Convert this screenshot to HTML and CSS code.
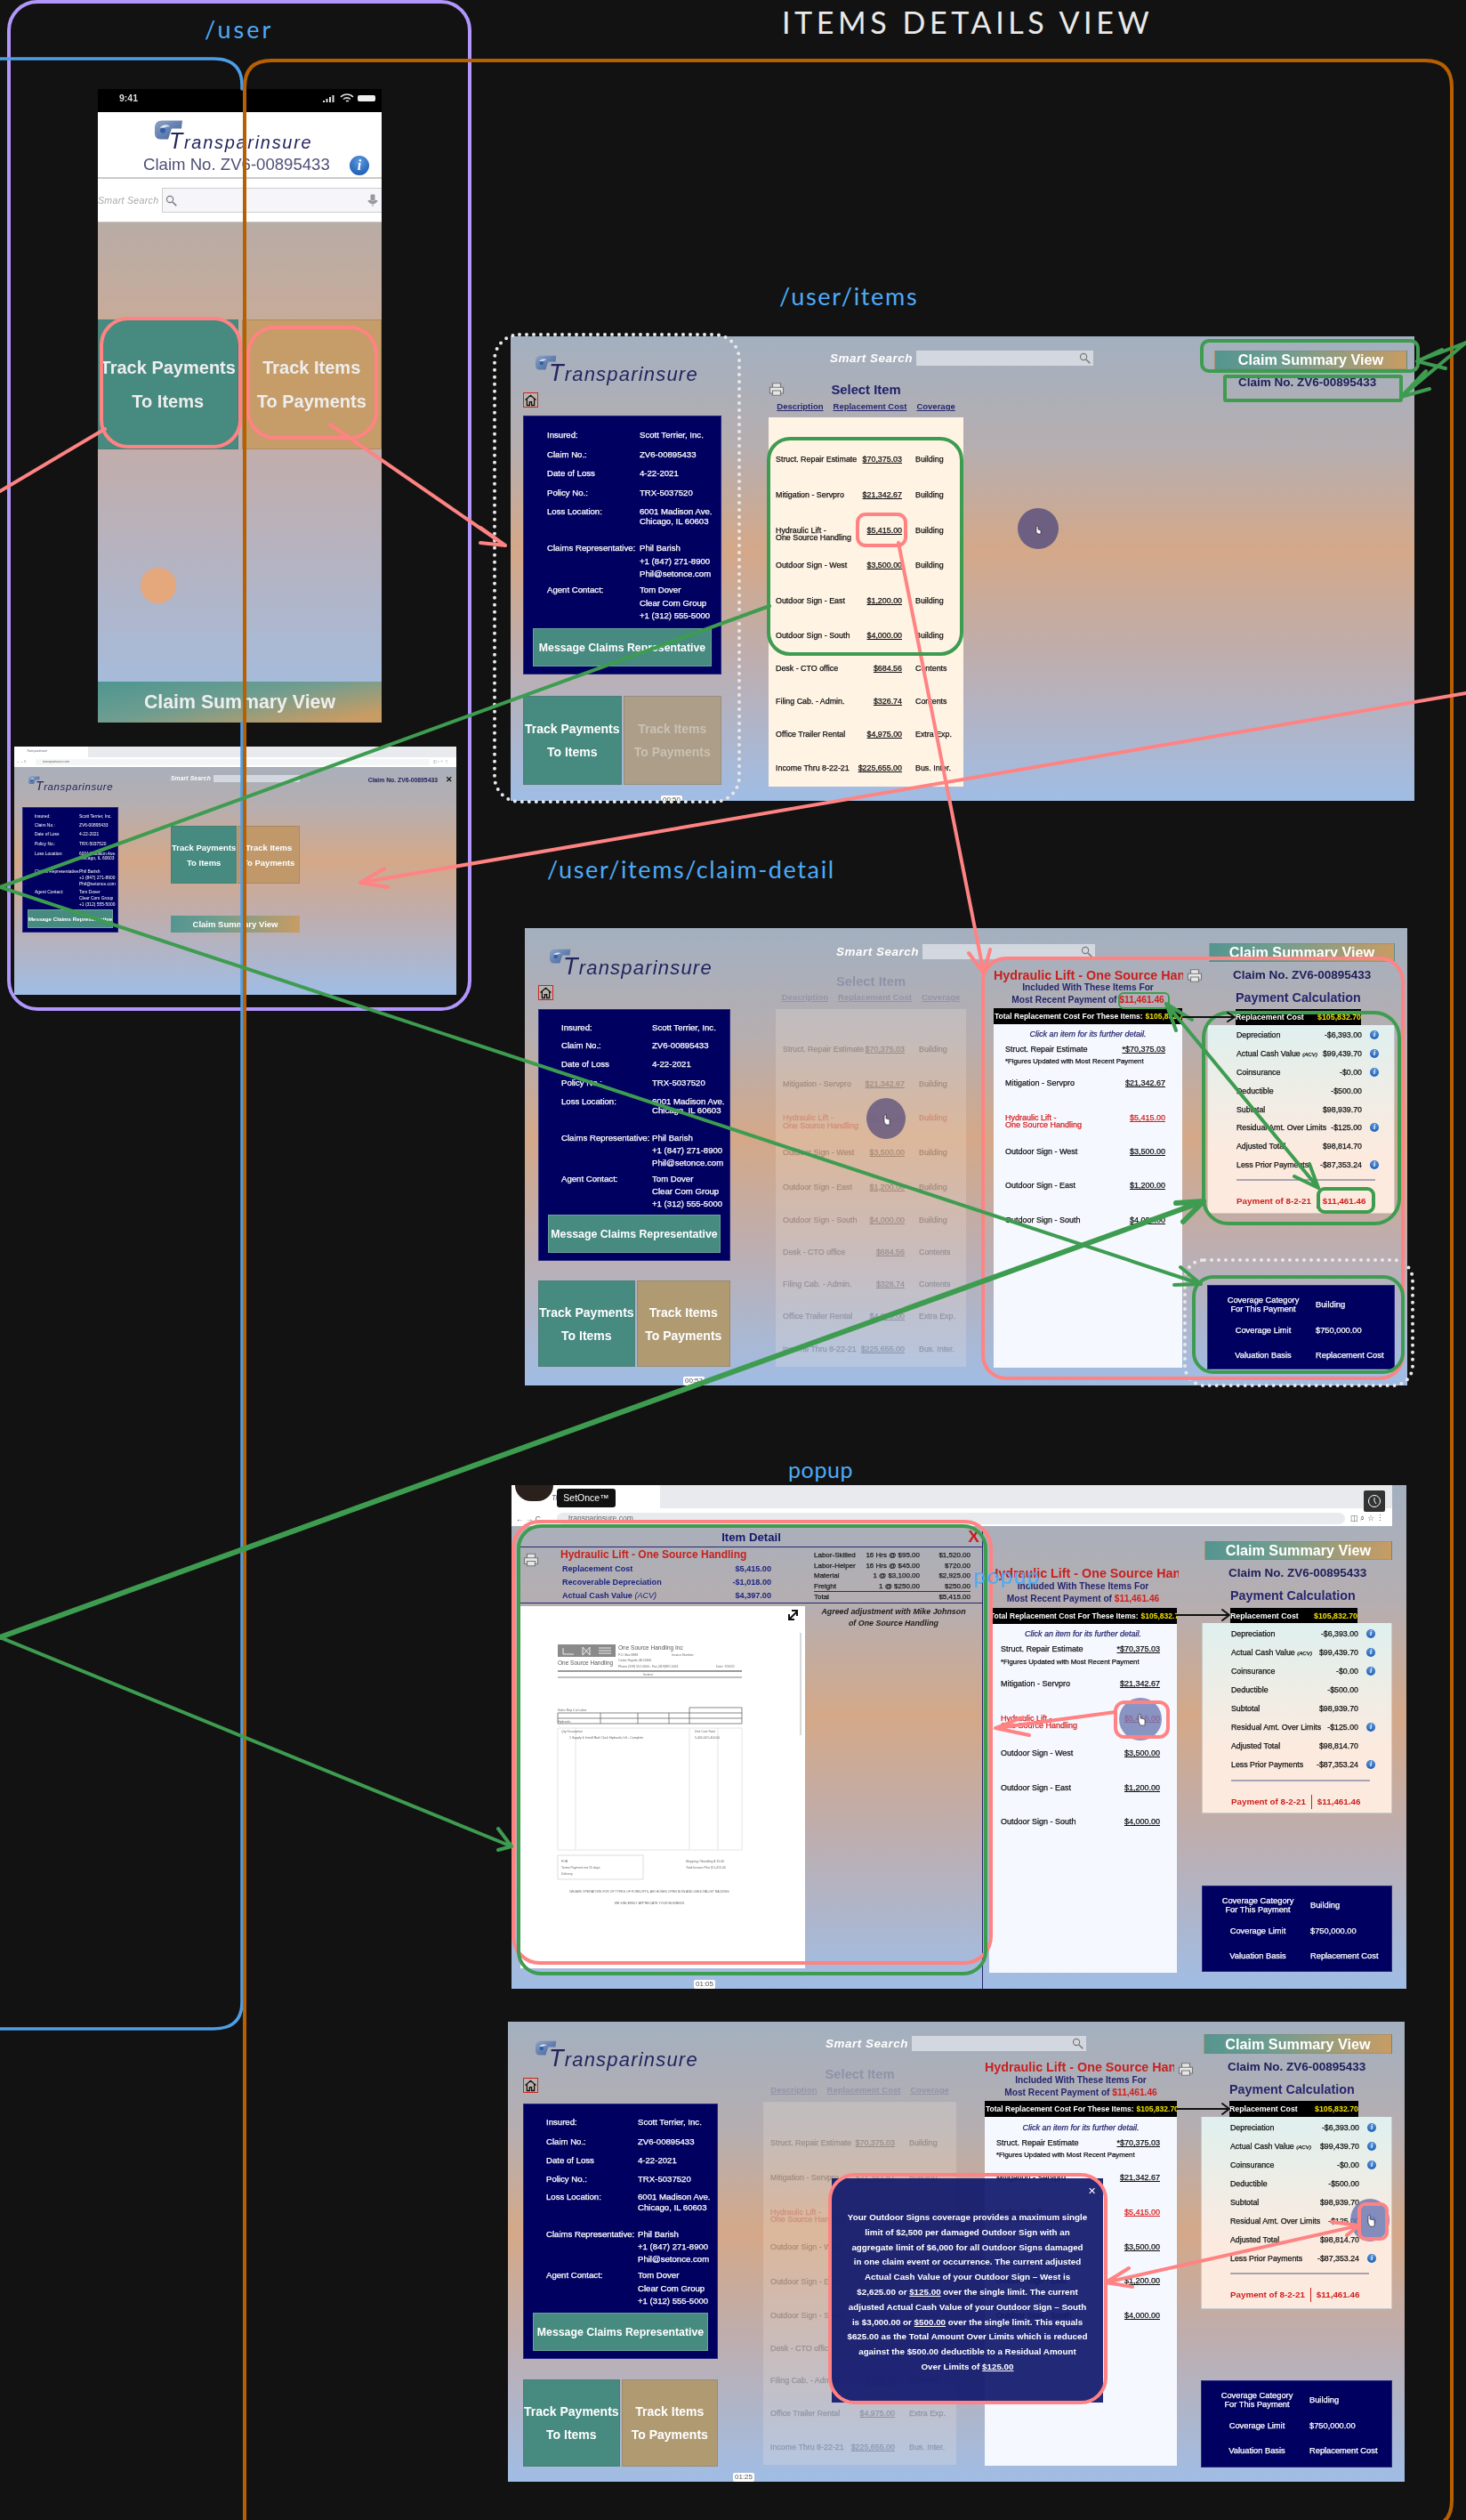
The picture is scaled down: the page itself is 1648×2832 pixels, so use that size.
FILE: index.html
```html
<!DOCTYPE html>
<html lang="en">
<head>
    <meta charset="UTF-8">
    <title>Items details view</title>
    <link rel="stylesheet" href="styles.css">
</head>
<body>
<svg width="0" height="0" class="defs">
    <defs>
        <linearGradient id="markFill" x1="0" y1="0" x2="1" y2="1">
            <stop offset="0" stop-color="#8fa3c4"/>
            <stop offset="1" stop-color="#3d5f9c"/>
        </linearGradient>
        <symbol id="mark" viewBox="0 0 32 24">
            <path d="M8 1h23l-1 9H19l-4 12H6C2 22 0 19 0 15V9C0 4 3 1 8 1z" fill="url(#markFill)"/>
            <path d="M6 9c3-4 9-4 11-1-3-1-6 0-8 3z" fill="#dfe8f4"/>
            <circle cx="9" cy="12" r="3" fill="#2f5fa8"/>
        </symbol>
        <symbol id="printer" viewBox="0 0 24 22">
            <path d="M6 8V2h12v6M6 17H2V8h20v9h-4M6 13h12v7H6z" fill="#e6e6e6" stroke="#777" stroke-width="1.6"/>
        </symbol>
        <symbol id="glass" viewBox="0 0 18 18">
            <circle cx="7" cy="7" r="5" fill="none" stroke="#777" stroke-width="1.6"/>
            <path d="M11 11l6 6" stroke="#777" stroke-width="2.2"/>
        </symbol>
        <symbol id="house" viewBox="0 0 20 20">
            <path d="M2 10l8-7 8 7M4.500 8.500V18h4v-5h3v5h4V8.500" fill="none" stroke="#111" stroke-width="1.700"/>
        </symbol>
    </defs>
</svg>

<!-- hand written labels -->
<div class="tag tag-user">/user</div>
<div class="title">ITEMS DETAILS VIEW</div>
<div class="tag tag-items">/user/items</div>
<div class="tag tag-claim">/user/items/claim-detail</div>
<div class="tag tag-popup">popup</div>

<!-- phone -->
<section class="phone">
    <div class="status">
        <span>9:41</span>
        <svg width="60" height="11" viewBox="0 0 60 11">
            <path d="M0 8h2v2H0zM3.500 6h2v4h-2zM7 4h2v6H7zM10.500 2h2v8h-2z" fill="#ddd"/>
            <path d="M20 4c4-4 10-4 14 0M23 6.500c2.500-2 5.500-2 8 0M26 9c1-1 2-1 3 0" fill="none" stroke="#ddd" stroke-width="1.600"/>
            <rect x="39" y="2" width="20" height="7" rx="2" fill="#eee"/>
        </svg>
    </div>
    <div class="phone-brand">
        <div class="logo logo-phone">
            <svg class="mark"><use href="#mark"/></svg>
            <span class="logo-text"><b>T</b>ransparinsure</span>
        </div>
        <div class="phone-claim">Claim No. ZV6-00895433<i class="dot dot-big">i</i></div>
    </div>
    <div class="phone-search">
        <span>Smart Search</span>
        <div class="phone-input">
            <svg width="13" height="13"><use href="#glass"/></svg>
            <svg width="12" height="15" viewBox="0 0 12 15"><path d="M4 1h4v7H4zM1 7c0 5 10 5 10 0M6 11v3" fill="#999" stroke="#999"/></svg>
        </div>
    </div>
    <div class="phone-body">
        <div class="tracks">
            <div class="track teal">Track Payments<br>To Items</div>
            <div class="track tan">Track Items<br>To Payments</div>
        </div>
    </div>
    <div class="summary phone-summary">Claim Summary View</div>
    <span class="touch"></span>
</section>

<!-- browser thumbnail -->
<section class="screen screen-e">
    <div class="chrome">
        <div class="tabs"><span class="tab">Transparinsure</span></div>
        <div class="address-row"><span class="nav">← → C</span><div class="address">transparinsure.com</div><span class="tools">◫ ⌕ ☆ ⋮</span></div>
    </div>
    <div class="side">
        <div class="logo">
            <svg class="mark"><use href="#mark"/></svg>
            <span class="logo-text"><b>T</b>ransparinsure</span>
        </div>
        <div class="info">
            <div class="info-row"><span>Insured:</span><span>Scott Terrier, Inc.</span></div>
            <div class="info-row"><span>Claim No.:</span><span>ZV6-00895433</span></div>
            <div class="info-row"><span>Date of Loss</span><span>4-22-2021</span></div>
            <div class="info-row"><span>Policy No.:</span><span>TRX-5037520</span></div>
            <div class="info-row addr"><span>Loss Location:</span><span>6001 Madison Ave.<br>Chicago, IL 60603</span></div>
            <div class="info-row contact rep"><span>Claims Representative:</span><span>Phil Barish<br>+1 (847) 271-8900<br>Phil@setonce.com</span></div>
            <div class="info-row contact agent"><span>Agent Contact:</span><span>Tom Dover<br>Clear Com Group<br>+1 (312) 555-5000</span></div>
            <div class="msg-btn">Message Claims Representative</div>
        </div>
    </div>
    <div class="thumb-mid">
        <div class="search">
            <span>Smart Search</span>
            <div class="search-input"></div>
        </div>
        <div class="tracks">
            <div class="track teal">Track Payments<br>To Items</div>
            <div class="track tan">Track Items<br>To Payments</div>
        </div>
        <div class="summary">Claim Summary View</div>
    </div>
    <div class="thumb-right">
        <span>Claim No. ZV6-00895433</span><b>✕</b>
    </div>
</section>

<!-- /user/items -->
<section class="screen screen-a">
    <div class="side">
        <div class="logo">
            <svg class="mark"><use href="#mark"/></svg>
            <span class="logo-text"><b>T</b>ransparinsure</span>
        </div>
        <div class="home"><svg width="15" height="15"><use href="#house"/></svg></div>
        <div class="info">
            <div class="info-row"><span>Insured:</span><span>Scott Terrier, Inc.</span></div>
            <div class="info-row"><span>Claim No.:</span><span>ZV6-00895433</span></div>
            <div class="info-row"><span>Date of Loss</span><span>4-22-2021</span></div>
            <div class="info-row"><span>Policy No.:</span><span>TRX-5037520</span></div>
            <div class="info-row addr"><span>Loss Location:</span><span>6001 Madison Ave.<br>Chicago, IL 60603</span></div>
            <div class="info-row contact rep"><span>Claims Representative:</span><span>Phil Barish<br>+1 (847) 271-8900<br>Phil@setonce.com</span></div>
            <div class="info-row contact agent"><span>Agent Contact:</span><span>Tom Dover<br>Clear Com Group<br>+1 (312) 555-5000</span></div>
            <div class="msg-btn">Message Claims Representative</div>
        </div>
        <div class="tracks">
            <div class="track teal">Track Payments<br>To Items</div>
            <div class="track tan off">Track Items<br>To Payments</div>
        </div>
    </div>
    <div class="search">
        <span>Smart Search</span>
        <div class="search-input"><svg width="13" height="13"><use href="#glass"/></svg></div>
    </div>
    <div class="list">
        <svg class="list-print" width="18" height="17"><use href="#printer"/></svg>
        <div class="list-title">Select Item</div>
        <div class="list-head"><u>Description</u><u>Replacement Cost</u><u>Coverage</u></div>
        <div class="items">
            <div class="item"><span>Struct. Repair Estimate</span><u>$70,375.03</u><span>Building</span></div>
            <div class="item"><span>Mitigation - Servpro</span><u>$21,342.67</u><span>Building</span></div>
            <div class="item"><span class="two">Hydraulic Lift -<br>One Source Handling</span><u>$5,415.00</u><span>Building</span></div>
            <div class="item"><span>Outdoor Sign - West</span><u>$3,500.00</u><span>Building</span></div>
            <div class="item"><span>Outdoor Sign - East</span><u>$1,200.00</u><span>Building</span></div>
            <div class="item"><span>Outdoor Sign - South</span><u>$4,000.00</u><span>Building</span></div>
            <div class="item"><span>Desk - CTO office</span><u>$684.56</u><span>Contents</span></div>
            <div class="item"><span>Filing Cab. - Admin.</span><u>$326.74</u><span>Contents</span></div>
            <div class="item"><span>Office Trailer Rental</span><u>$4,975.00</u><span>Extra Exp.</span></div>
            <div class="item"><span>Income Thru 8-22-21</span><u>$225,655.00</u><span>Bus. Inter.</span></div>
        </div>
    </div>
    <div class="calc">
        <div class="summary">Claim Summary View</div>
        <div class="claim-no">Claim No. ZV6-00895433</div>
    </div>
    <span class="stamp">00:50</span>
</section>

<!-- /user/items/claim-detail -->
<section class="screen screen-b">
    <div class="side">
        <div class="logo">
            <svg class="mark"><use href="#mark"/></svg>
            <span class="logo-text"><b>T</b>ransparinsure</span>
        </div>
        <div class="home"><svg width="15" height="15"><use href="#house"/></svg></div>
        <div class="info">
            <div class="info-row"><span>Insured:</span><span>Scott Terrier, Inc.</span></div>
            <div class="info-row"><span>Claim No.:</span><span>ZV6-00895433</span></div>
            <div class="info-row"><span>Date of Loss</span><span>4-22-2021</span></div>
            <div class="info-row"><span>Policy No.:</span><span>TRX-5037520</span></div>
            <div class="info-row addr"><span>Loss Location:</span><span>6001 Madison Ave.<br>Chicago, IL 60603</span></div>
            <div class="info-row contact rep"><span>Claims Representative:</span><span>Phil Barish<br>+1 (847) 271-8900<br>Phil@setonce.com</span></div>
            <div class="info-row contact agent"><span>Agent Contact:</span><span>Tom Dover<br>Clear Com Group<br>+1 (312) 555-5000</span></div>
            <div class="msg-btn">Message Claims Representative</div>
        </div>
        <div class="tracks">
            <div class="track teal">Track Payments<br>To Items</div>
            <div class="track sand">Track Items<br>To Payments</div>
        </div>
    </div>
    <div class="search">
        <span>Smart Search</span>
        <div class="search-input"><svg width="13" height="13"><use href="#glass"/></svg></div>
    </div>
    <div class="list faded">
        <div class="list-title">Select Item</div>
        <div class="list-head"><u>Description</u><u>Replacement Cost</u><u>Coverage</u></div>
        <div class="items">
            <div class="item"><span>Struct. Repair Estimate</span><u>$70,375.03</u><span>Building</span></div>
            <div class="item"><span>Mitigation - Servpro</span><u>$21,342.67</u><span>Building</span></div>
            <div class="item red"><span class="two">Hydraulic Lift -<br>One Source Handling</span><u>$5,415.00</u><span>Building</span></div>
            <div class="item"><span>Outdoor Sign - West</span><u>$3,500.00</u><span>Building</span></div>
            <div class="item"><span>Outdoor Sign - East</span><u>$1,200.00</u><span>Building</span></div>
            <div class="item"><span>Outdoor Sign - South</span><u>$4,000.00</u><span>Building</span></div>
            <div class="item"><span>Desk - CTO office</span><u>$684.56</u><span>Contents</span></div>
            <div class="item"><span>Filing Cab. - Admin.</span><u>$326.74</u><span>Contents</span></div>
            <div class="item"><span>Office Trailer Rental</span><u>$4,975.00</u><span>Extra Exp.</span></div>
            <div class="item"><span>Income Thru 8-22-21</span><u>$225,655.00</u><span>Bus. Inter.</span></div>
        </div>
    </div>
    <div class="detail">
        <div class="detail-title">Hydraulic Lift - One Source Handling</div>
        <svg class="detail-print" width="18" height="17"><use href="#printer"/></svg>
        <div class="detail-sub">Included With These Items For<br>Most Recent Payment of <em>$11,461.46</em></div>
        <div class="bar"><span>Total Replacement Cost For These Items:</span> <b>$105,832.70</b></div>
        <div class="pay-items">
            <div class="hint">Click an item for its further detail.</div>
            <div class="pay-item"><span>Struct. Repair Estimate</span><u>*$70,375.03</u></div>
            <div class="note">*Figures Updated with Most Recent Payment</div>
            <div class="pay-item"><span>Mitigation - Servpro</span><u>$21,342.67</u></div>
            <div class="pay-item red"><span class="two">Hydraulic Lift -<br>One Source Handling</span><u>$5,415.00</u></div>
            <div class="pay-item"><span>Outdoor Sign - West</span><u>$3,500.00</u></div>
            <div class="pay-item"><span>Outdoor Sign - East</span><u>$1,200.00</u></div>
            <div class="pay-item"><span>Outdoor Sign - South</span><u>$4,000.00</u></div>
        </div>
    </div>
    <div class="calc">
        <div class="summary">Claim Summary View</div>
        <div class="claim-no">Claim No. ZV6-00895433</div>
        <div class="calc-title">Payment Calculation</div>
        <div class="calc-bar"><span>Replacement Cost</span><b>$105,832.70</b></div>
        <div class="calc-panel">
            <div class="calc-row"><span>Depreciation</span><span>-$6,393.00</span><i class="dot">i</i></div>
            <div class="calc-row"><span>Actual Cash Value <small>(ACV)</small></span><span>$99,439.70</span><i class="dot">i</i></div>
            <div class="calc-row"><span>Coinsurance</span><span>-$0.00</span><i class="dot">i</i></div>
            <div class="calc-row"><span>Deductible</span><span>-$500.00</span></div>
            <div class="calc-row"><span>Subtotal</span><span>$98,939.70</span></div>
            <div class="calc-row"><span>Residual Amt. Over Limits</span><span>-$125.00</span><i class="dot">i</i></div>
            <div class="calc-row"><span>Adjusted Total</span><span>$98,814.70</span></div>
            <div class="calc-row"><span>Less Prior Payments</span><span>-$87,353.24</span><i class="dot">i</i></div>
            <div class="calc-rule"></div>
            <div class="calc-pay"><span>Payment of 8-2-21</span><b>$11,461.46</b></div>
        </div>
        <div class="cover">
            <span class="cover-key">Coverage Category<br>For This Payment</span><span>Building</span>
            <span class="cover-key">Coverage Limit</span><span>$750,000.00</span>
            <span class="cover-key">Valuation Basis</span><span>Replacement Cost</span>
        </div>
    </div>
    <span class="stamp">00:57</span>
</section>

<!-- popup -->
<section class="screen screen-c">
    <div class="chrome">
        <div class="tabs"><span class="tab">Transparinsure</span></div>
        <div class="address-row"><span class="nav">← → C</span><div class="address">transparinsure.com</div><span class="tools">◫ ⌕ ☆ ⋮</span></div>
        <span class="avatar"></span>
        <span class="badge">SetOnce™</span>
        <span class="clock"><svg width="16" height="16" viewBox="0 0 16 16"><circle cx="8" cy="8" r="6.500" fill="none" stroke="#fff"/><path d="M8 4v4l2 3" fill="none" stroke="#fff"/></svg></span>
    </div>
    <div class="modal">
        <div class="modal-top"><h2>Item Detail</h2><b class="modal-x">X</b></div>
        <div class="modal-info">
            <svg width="18" height="20"><use href="#printer"/></svg>
            <div class="modal-costs">
                <h3>Hydraulic Lift - One Source Handling</h3>
                <div class="cost"><span>Replacement Cost</span><span>$5,415.00</span></div>
                <div class="cost"><span>Recoverable Depreciation</span><span>-$1,018.00</span></div>
                <div class="cost"><span>Actual Cash Value <i>(ACV)</i></span><span>$4,397.00</span></div>
            </div>
            <div class="modal-table">
                <div class="mt-row"><span>Labor-Skilled</span><span>16 Hrs @ $95.00</span><span>$1,520.00</span></div>
                <div class="mt-row"><span>Labor-Helper</span><span>16 Hrs @ $45.00</span><span>$720.00</span></div>
                <div class="mt-row"><span>Material</span><span>1 @ $3,100.00</span><span>$2,925.00</span></div>
                <div class="mt-row"><span>Freight</span><span>1 @ $250.00</span><span>$250.00</span></div>
                <div class="mt-row mt-total"><span>Total</span><span></span><span>$5,415.00</span></div>
            </div>
        </div>
        <div class="modal-main">
            <div class="doc">
                <svg width="320" height="407" viewBox="0 0 320 407">
                    <rect x="42" y="43" width="65" height="14" fill="#8a8a8a"/>
                    <path d="M48 54V47M48 54h12M70 46v9M78 46v9M70 46l8 9M78 46l-8 9M88 47h14M88 50h14M88 53h14" stroke="#eee" fill="none"/>
                    <text x="42" y="66" class="doc-t">One Source Handling</text>
                    <text x="110" y="49" class="doc-t">One Source Handling Inc</text>
                    <text x="110" y="56" class="doc-s">P.O. Box 8883</text>
                    <text x="110" y="62" class="doc-s">Cedar Rapids, IA 52406</text>
                    <text x="110" y="69" class="doc-s">Phone (319) 551 0000 - Fax (319)857-5451</text>
                    <text x="170" y="56" class="doc-s">Invoice Number:</text>
                    <text x="220" y="69" class="doc-s">Date: 7/20/21</text>
                    <path d="M42 73h207" stroke="#777" stroke-width="1.500"/>
                    <path d="M42 80h207" stroke="#aaa" stroke-width="1.500"/>
                    <text x="138" y="78" class="doc-s">Invoice</text>
                    <path d="M42 120h207v12H42zM42 126h207M90 120v12M132 120v12M167 120v12M190 114v18M190 114h59v6" fill="none" stroke="#555" stroke-width=".7"/>
                    <text x="42" y="118" class="doc-s">Sales Rep Cut Labor</text>
                    <text x="42" y="131" class="doc-s">Hydraulic</text>
                    <path d="M42 137h207v137H42zM62 137v137M190 137v137M222 137v137" fill="none" stroke="#e4e4e4"/>
                    <text x="46" y="142" class="doc-s">Qty  Description</text>
                    <text x="196" y="142" class="doc-s">Unit Cost   Total</text>
                    <text x="55" y="149" class="doc-s">1   Supply &amp; Install Bad Clock Hydraulic Lift - Complete</text>
                    <text x="196" y="149" class="doc-s">5,400.00   5,400.00</text>
                    <rect x="42" y="280" width="96" height="27" fill="none" stroke="#ddd"/>
                    <text x="46" y="288" class="doc-s">FOB</text>
                    <text x="46" y="295" class="doc-s">Terms   Payment net 15 days</text>
                    <text x="46" y="302" class="doc-s">Delivery</text>
                    <text x="186" y="288" class="doc-s">Shipping / Handling  $ 15.00</text>
                    <text x="186" y="295" class="doc-s">Total Invoice  Plus  $ 5,415.00</text>
                    <text x="145" y="322" text-anchor="middle" class="doc-s">WE ARE OPERATORS FOR OF TYPES OF FORKLIFTS, AIR HOSES OPEN NOW AND USED PALLET RACKING</text>
                    <text x="145" y="335" text-anchor="middle" class="doc-s">WE SINCERELY APPRECIATE YOUR BUSINESS</text>
                    <path d="M315 30v115" stroke="#ccc" stroke-width="1.500"/>
                    <path d="M302 15l9-9M305 5h6v6M302 9v6h6" fill="none" stroke="#111" stroke-width="2"/>
                </svg>
            </div>
            <div class="modal-note">Agreed adjustment with Mike Johnson<br>of One Source Handling</div>
        </div>
    </div>
    <div class="detail">
        <div class="detail-title">Hydraulic Lift - One Source Handling</div>
        <div class="detail-sub">Included With These Items For<br>Most Recent Payment of <em>$11,461.46</em></div>
        <div class="bar"><span>Total Replacement Cost For These Items:</span> <b>$105,832.70</b></div>
        <div class="pay-items">
            <div class="hint">Click an item for its further detail.</div>
            <div class="pay-item"><span>Struct. Repair Estimate</span><u>*$70,375.03</u></div>
            <div class="note">*Figures Updated with Most Recent Payment</div>
            <div class="pay-item"><span>Mitigation - Servpro</span><u>$21,342.67</u></div>
            <div class="pay-item red"><span class="two">Hydraulic Lift -<br>One Source Handling</span><u>$5,415.00</u></div>
            <div class="pay-item"><span>Outdoor Sign - West</span><u>$3,500.00</u></div>
            <div class="pay-item"><span>Outdoor Sign - East</span><u>$1,200.00</u></div>
            <div class="pay-item"><span>Outdoor Sign - South</span><u>$4,000.00</u></div>
        </div>
    </div>
    <div class="calc">
        <div class="summary">Claim Summary View</div>
        <div class="claim-no">Claim No. ZV6-00895433</div>
        <div class="calc-title">Payment Calculation</div>
        <div class="calc-bar"><span>Replacement Cost</span><b>$105,832.70</b></div>
        <div class="calc-panel">
            <div class="calc-row"><span>Depreciation</span><span>-$6,393.00</span><i class="dot">i</i></div>
            <div class="calc-row"><span>Actual Cash Value <small>(ACV)</small></span><span>$99,439.70</span><i class="dot">i</i></div>
            <div class="calc-row"><span>Coinsurance</span><span>-$0.00</span><i class="dot">i</i></div>
            <div class="calc-row"><span>Deductible</span><span>-$500.00</span></div>
            <div class="calc-row"><span>Subtotal</span><span>$98,939.70</span></div>
            <div class="calc-row"><span>Residual Amt. Over Limits</span><span>-$125.00</span><i class="dot">i</i></div>
            <div class="calc-row"><span>Adjusted Total</span><span>$98,814.70</span></div>
            <div class="calc-row"><span>Less Prior Payments</span><span>-$87,353.24</span><i class="dot">i</i></div>
            <div class="calc-rule"></div>
            <div class="calc-pay"><span>Payment of 8-2-21</span><b>$11,461.46</b></div>
        </div>
        <div class="cover">
            <span class="cover-key">Coverage Category<br>For This Payment</span><span>Building</span>
            <span class="cover-key">Coverage Limit</span><span>$750,000.00</span>
            <span class="cover-key">Valuation Basis</span><span>Replacement Cost</span>
        </div>
    </div>
    <span class="stamp">01:05</span>
</section>

<!-- info popup -->
<section class="screen screen-d">
    <div class="side">
        <div class="logo">
            <svg class="mark"><use href="#mark"/></svg>
            <span class="logo-text"><b>T</b>ransparinsure</span>
        </div>
        <div class="home"><svg width="15" height="15"><use href="#house"/></svg></div>
        <div class="info">
            <div class="info-row"><span>Insured:</span><span>Scott Terrier, Inc.</span></div>
            <div class="info-row"><span>Claim No.:</span><span>ZV6-00895433</span></div>
            <div class="info-row"><span>Date of Loss</span><span>4-22-2021</span></div>
            <div class="info-row"><span>Policy No.:</span><span>TRX-5037520</span></div>
            <div class="info-row addr"><span>Loss Location:</span><span>6001 Madison Ave.<br>Chicago, IL 60603</span></div>
            <div class="info-row contact rep"><span>Claims Representative:</span><span>Phil Barish<br>+1 (847) 271-8900<br>Phil@setonce.com</span></div>
            <div class="info-row contact agent"><span>Agent Contact:</span><span>Tom Dover<br>Clear Com Group<br>+1 (312) 555-5000</span></div>
            <div class="msg-btn">Message Claims Representative</div>
        </div>
        <div class="tracks">
            <div class="track teal">Track Payments<br>To Items</div>
            <div class="track sand">Track Items<br>To Payments</div>
        </div>
    </div>
    <div class="search">
        <span>Smart Search</span>
        <div class="search-input"><svg width="13" height="13"><use href="#glass"/></svg></div>
    </div>
    <div class="list faded">
        <div class="list-title">Select Item</div>
        <div class="list-head"><u>Description</u><u>Replacement Cost</u><u>Coverage</u></div>
        <div class="items">
            <div class="item"><span>Struct. Repair Estimate</span><u>$70,375.03</u><span>Building</span></div>
            <div class="item"><span>Mitigation - Servpro</span><u>$21,342.67</u><span>Building</span></div>
            <div class="item red"><span class="two">Hydraulic Lift -<br>One Source Handling</span><u>$5,415.00</u><span>Building</span></div>
            <div class="item"><span>Outdoor Sign - West</span><u>$3,500.00</u><span>Building</span></div>
            <div class="item"><span>Outdoor Sign - East</span><u>$1,200.00</u><span>Building</span></div>
            <div class="item"><span>Outdoor Sign - South</span><u>$4,000.00</u><span>Building</span></div>
            <div class="item"><span>Desk - CTO office</span><u>$684.56</u><span>Contents</span></div>
            <div class="item"><span>Filing Cab. - Admin.</span><u>$326.74</u><span>Contents</span></div>
            <div class="item"><span>Office Trailer Rental</span><u>$4,975.00</u><span>Extra Exp.</span></div>
            <div class="item"><span>Income Thru 8-22-21</span><u>$225,655.00</u><span>Bus. Inter.</span></div>
        </div>
    </div>
    <div class="detail">
        <div class="detail-title">Hydraulic Lift - One Source Handling</div>
        <svg class="detail-print" width="18" height="17"><use href="#printer"/></svg>
        <div class="detail-sub">Included With These Items For<br>Most Recent Payment of <em>$11,461.46</em></div>
        <div class="bar"><span>Total Replacement Cost For These Items:</span> <b>$105,832.70</b></div>
        <div class="pay-items">
            <div class="hint">Click an item for its further detail.</div>
            <div class="pay-item"><span>Struct. Repair Estimate</span><u>*$70,375.03</u></div>
            <div class="note">*Figures Updated with Most Recent Payment</div>
            <div class="pay-item"><span>Mitigation - Servpro</span><u>$21,342.67</u></div>
            <div class="pay-item red"><span class="two">Hydraulic Lift -<br>One Source Handling</span><u>$5,415.00</u></div>
            <div class="pay-item"><span>Outdoor Sign - West</span><u>$3,500.00</u></div>
            <div class="pay-item"><span>Outdoor Sign - East</span><u>$1,200.00</u></div>
            <div class="pay-item"><span>Outdoor Sign - South</span><u>$4,000.00</u></div>
        </div>
    </div>
    <div class="calc">
        <div class="summary">Claim Summary View</div>
        <div class="claim-no">Claim No. ZV6-00895433</div>
        <div class="calc-title">Payment Calculation</div>
        <div class="calc-bar"><span>Replacement Cost</span><b>$105,832.70</b></div>
        <div class="calc-panel">
            <div class="calc-row"><span>Depreciation</span><span>-$6,393.00</span><i class="dot">i</i></div>
            <div class="calc-row"><span>Actual Cash Value <small>(ACV)</small></span><span>$99,439.70</span><i class="dot">i</i></div>
            <div class="calc-row"><span>Coinsurance</span><span>-$0.00</span><i class="dot">i</i></div>
            <div class="calc-row"><span>Deductible</span><span>-$500.00</span></div>
            <div class="calc-row"><span>Subtotal</span><span>$98,939.70</span></div>
            <div class="calc-row"><span>Residual Amt. Over Limits</span><span>-$125.00</span><i class="dot">i</i></div>
            <div class="calc-row"><span>Adjusted Total</span><span>$98,814.70</span></div>
            <div class="calc-row"><span>Less Prior Payments</span><span>-$87,353.24</span><i class="dot">i</i></div>
            <div class="calc-rule"></div>
            <div class="calc-pay"><span>Payment of 8-2-21</span><b>$11,461.46</b></div>
        </div>
        <div class="cover">
            <span class="cover-key">Coverage Category<br>For This Payment</span><span>Building</span>
            <span class="cover-key">Coverage Limit</span><span>$750,000.00</span>
            <span class="cover-key">Valuation Basis</span><span>Replacement Cost</span>
        </div>
    </div>
    <div class="tip">
        <span class="tip-x">✕</span>
        Your Outdoor Signs coverage provides a maximum single<br>
        limit of $2,500 per damaged Outdoor Sign with an<br>
        aggregate limit of $6,000 for all Outdoor Signs damaged<br>
        in one claim event or occurrence. The current adjusted<br>
        Actual Cash Value of your Outdoor Sign – West is<br>
        $2,625.00 or <u>$125.00</u> over the single limit. The current<br>
        adjusted Actual Cash Value of your Outdoor Sign – South<br>
        is $3,000.00 or <u>$500.00</u> over the single limit. This equals<br>
        $625.00 as the Total Amount Over Limits which is reduced<br>
        against the $500.00 deductible to a Residual Amount<br>
        Over Limits of <u>$125.00</u>
    </div>
    <span class="stamp">01:25</span>
</section>

<!-- frames and arrows drawn over the screens -->
<svg class="sketch" width="1648" height="2832" viewBox="0 0 1648 2832">
    <!-- cursor spots -->
    <ellipse cx="1167" cy="594" rx="23" ry="23" fill="#6d5f82"/>
    <ellipse cx="996" cy="1257" rx="22" ry="23" fill="#6d5f82" fill-opacity=".9"/>
    <ellipse cx="1282" cy="1932" rx="24" ry="24" fill="#6f7bb4" fill-opacity=".8"/>
    <ellipse cx="1540" cy="2495" rx="22" ry="24" fill="#6f7bb4" fill-opacity=".85"/>
    <g class="hand">
        <path d="M1165 592v6l2 2h3v-4l-3-1v-4z"/>
        <path d="M994 1254v7l2 3h4v-6l-4-1v-5z"/>
        <path d="M1280 1927v8l2 4h5v-7l-5-1v-5z"/>
        <path d="M1538 2490v8l2 4h5v-7l-5-1v-5z"/>
    </g>

    <g class="line violet">
        <rect x="10" y="2" width="518" height="1132" rx="32"/>
    </g>
    <g class="line blue">
        <path d="M0 66H240Q272 66 272 96V100"/>
        <path d="M272 812V2250Q272 2280 240 2280H0"/>
    </g>
    <g class="line amber">
        <path d="M275 2840V98Q275 68 305 68H1602Q1632 68 1632 98V2810Q1632 2840 1602 2840"/>
    </g>

    <g class="line white">
        <rect x="556" y="376" width="275" height="525" rx="28"/>
        <rect x="1332" y="1416" width="256" height="141" rx="22"/>
    </g>

    <g class="line pink">
        <rect x="114" y="358" width="156" height="144" rx="30"/>
        <rect x="279" y="368" width="144" height="124" rx="30"/>
        <path d="M118 482L0 552"/>
        <path d="M371 477L568 613M540 593L568 613L540 610"/>
        <rect x="964" y="578" width="54" height="35" rx="9"/>
        <path d="M1010 610L1106 1094M1089 1071L1106 1094L1113 1067"/>
        <path d="M1648 779L405 992M432 976L405 992L436 997"/>
        <rect x="1105" y="1077" width="472" height="472" rx="26"/>
        <rect x="577" y="1710" width="537" height="496" rx="30"/>
        <rect x="1254" y="1913" width="59" height="39" rx="10"/>
        <path d="M1254 1924L1119 1942M1150 1930L1119 1942L1157 1950"/>
        <rect x="933" y="2444" width="310" height="256" rx="28"/>
        <rect x="1528" y="2477" width="31" height="39" rx="7"/>
        <path d="M1528 2501L1243 2565M1269 2549L1243 2565L1273 2570M1497 2497L1528 2501L1514 2512"/>
    </g>

    <g class="line green">
        <rect x="864" y="493" width="217" height="242" rx="24"/>
        <rect x="1351" y="383" width="243" height="34" rx="8"/>
        <rect x="1377" y="423" width="198" height="27" rx="1"/>
        <path d="M1648 385L1593 406M1621 393L1593 406L1625 414"/>
        <path d="M1648 385L1575 446M1603 417L1575 446L1607 437"/>
        <path d="M865 681L0 997L1350 1443M1327 1424L1350 1443L1320 1444"/>
        <rect x="1258" y="1116" width="56" height="17" rx="5" class="fine"/>
        <rect x="1353" y="1138" width="220" height="237" rx="28"/>
        <rect x="1482" y="1336" width="62" height="26" rx="7"/>
        <rect x="1342" y="1435" width="235" height="107" rx="22"/>
        <path d="M1311 1128L1482 1335M1340 1146L1311 1128L1322 1158M1455 1322L1482 1335L1472 1308"/>
        <path class="thick" d="M0 1840L1353 1350M1322 1352L1353 1350L1330 1373"/>
        <path d="M0 1840L575 2075M560 2055L575 2075L560 2079"/>
        <rect x="583" y="1715" width="525" height="503" rx="25"/>
    </g>

    <g class="line ink">
        <path d="M1330 1143H1388M1380 1138L1388 1143L1380 1148"/>
        <path d="M1323 1815H1382M1374 1809L1382 1815L1374 1821"/>
        <path d="M1323 2370H1382M1374 2364L1382 2370L1374 2376"/>
    </g>
</svg>
<div class="tag tag-popup2">popup</div>
</body>
</html>
```

FILE: styles.css
```css
* {
    box-sizing: border-box;
}

body {
    margin: 0;
    width: 1648px;
    height: 2832px;
    position: relative;
    overflow: hidden;
    background-color: #121212;
    font-family: "Liberation Sans", Arial, sans-serif;
}

.defs {
    position: absolute;
}

/* labels */
.tag, .title {
    position: absolute;
    font-family: Lato, sans-serif;
    white-space: nowrap;
}

.tag {
    color: #4dabf7;
    font-size: 27px;
    line-height: 30px;
}

.tag-user { left: 230px; top: 18px; letter-spacing: 3px; }
.tag-items { left: 876px; top: 318px; letter-spacing: 1.700px; }
.tag-claim { left: 615px; top: 962px; letter-spacing: 1.600px; }
.tag-popup { left: 886px; top: 1636px; font-size: 25px; letter-spacing: .6px; }
.tag-popup2 { left: 1094px; top: 1755px; font-size: 25px; letter-spacing: 1px; }

.title {
    left: 879px;
    top: 8px;
    color: #e9e9e9;
    font-size: 34px;
    line-height: 34px;
    letter-spacing: 4.600px;
}

/* sketch layer */
.sketch {
    position: absolute;
    left: 0;
    top: 0;
    pointer-events: none;
}

.line * {
    fill: none;
    stroke-width: 4;
    stroke-linecap: round;
    stroke-linejoin: round;
}

.violet * { stroke: #b197fc; stroke-width: 4; }
.blue * { stroke: #4d9fe8; stroke-width: 3.500; }
.amber * { stroke: #b85f00; stroke-width: 4; }
.pink * { stroke: #ff8383; }
.green * { stroke: #3e9c50; }
.green .thick { stroke-width: 6; }
.green .fine { stroke-width: 2; }
.ink * { stroke: #111; stroke-width: 2; }
.white * { stroke: #e8e8e8; stroke-width: 4; stroke-dasharray: 0 8; }

.hand path {
    fill: #fff;
    stroke: #222;
    stroke-width: .6;
}

/* shared screen */
.screen {
    position: absolute;
    display: grid;
    overflow: hidden;
    background: linear-gradient(180deg, #a3b0c0 0%, #b6aeb0 24%, #d4a888 46%, #bdaeb0 70%, #a0bde5 100%);
    filter: blur(.3px);
    --fs: 9.600px;
    --cn-pl: 29px;
}

.side { grid-column: 1; grid-row: 1 / 3; }
.search { grid-column: 3 / 6; grid-row: 1; }
.list { grid-column: 3; grid-row: 2; position: relative; }
.detail { grid-column: 5; grid-row: 2; position: relative; }
.calc { grid-column: 7; grid-row: 1 / 3; }

.screen-a {
    left: 574px; top: 378px; width: 1016px; height: 522px;
    padding-left: 14px;
    grid-template-columns: 223px 53px 219px 282px 0 0 217px;
    grid-template-rows: 40px 1fr;
    --logo-h: 63px; --logo-pt: 21px; --logo-ml: 14px;
    --navy-mt: 9px; --navy-h: 291px;
    --pad: 10px; --row: 21.500px; --addr: 11px; --con: 14.500px; --g1: 4.750px; --g2: 18.250px; --g3: 3.500px;
    --col: 104px; --info-pl: 26px;
    --track-mt: 24px; --track-h: 100px;
    --search-mt: 16px; --search-ml: 69px; --input-w: 199px;
    --sel-mt: 10px; --head-mt: 3px; --panel-mt: 6px; --panel-h: 415px; --items-pt: 27px;
    --items: 40px 40px 39.500px 39.500px 39.500px 38.500px 36.500px 36.500px 38px 38px;
    --item-cols: 148px 62px;
    --sum-mt: 16px; --sum-h: 21px; --sum-ml: 0;
    --cn-pl: 27px;
}

.screen-b {
    left: 590px; top: 1043px; width: 992px; height: 514px;
    padding-left: 15px;
    grid-template-columns: 216px 51px 214px 31px 212px 28px 211px;
    grid-template-rows: 42px 1fr;
    --logo-h: 64px; --logo-pt: 23px; --logo-ml: 13px;
    --navy-mt: 10px; --navy-h: 283px;
    --pad: 9.600px; --row: 20.700px; --addr: 10.500px; --con: 14px; --g1: 5.400px; --g2: 18.250px; --g3: 4px;
    --col: 102px; --info-pl: 25px;
    --track-mt: 22px; --track-h: 97px;
    --search-mt: 18px; --search-ml: 68px; --input-w: 194px;
    --sel-mt: 8px; --head-mt: 2px; --panel-mt: 7px; --panel-h: 402px; --items-pt: 25.500px;
    --items: 39px 38.500px 38.500px 39px 38px 37px 35.500px 35.500px 37px 37px;
    --item-cols: 144px 62px;
    --dt-mt: 1px; --sub-mt: -3px; --bar-mt: 2px; --dt-h: 386px;
    --pays: 18px 16px 10px 40px 38px 38px 38px 40px;
    --sum-mt: 17px; --sum-h: 21px; --sum-ml: 2px;
    --bar-c: 3px; --bar-h: 18px; --calc-h: 212px; --calc-row: 20.800px; --calc-w: 141px;
    --cover-mt: 80px; --cover-h: 95px;
}

.screen-c {
    left: 575px; top: 1669px; width: 1006px; height: 566px;
    padding-left: 10px;
    grid-template-columns: 520px 7px 0 0 211px 28px 214px;
    grid-template-rows: 46px 42px 1fr;
    --dt-mt: 1px; --sub-mt: -2px; --bar-mt: 3px; --dt-h: 392px;
    --pays: 18px 16px 12px 38px 40px 38px 40px 36px;
    --sum-mt: 17px; --sum-h: 21px; --sum-ml: 3px;
    --bar-c: 4px; --bar-h: 17px; --calc-h: 214px; --calc-row: 21.100px; --calc-w: 143px;
    --cover-mt: 81px; --cover-h: 97px;
    --cn-pl: 30px;
}

.screen-c .detail { grid-row: 3; }
.screen-c .calc { grid-row: 2 / 4; }

.screen-d {
    left: 571px; top: 2272px; width: 1008px; height: 517px;
    padding-left: 17px;
    grid-template-columns: 219px 51px 217px 32px 216px 27px 215px;
    grid-template-rows: 42px 1fr;
    --logo-h: 63px; --logo-pt: 21px; --logo-ml: 14px;
    --navy-mt: 12px; --navy-h: 287px;
    --pad: 9.350px; --row: 21.300px; --addr: 12px; --con: 14.300px; --g1: 3.350px; --g2: 16.750px; --g3: 3.750px;
    --col: 103px; --info-pl: 25px;
    --track-mt: 23px; --track-h: 98px;
    --search-mt: 16px; --search-ml: 70px; --input-w: 196px;
    --sel-mt: 7px; --head-mt: 2px; --panel-mt: 7px; --panel-h: 408px; --items-pt: 26.500px;
    --items: 39px 39px 39px 39px 39px 37.500px 35.500px 36.500px 38px 38px;
    --item-cols: 147px 62px;
    --dt-mt: -1px; --sub-mt: -2px; --bar-mt: 2px; --dt-h: 392px;
    --pays: 20px 14px 12px 40px 38px 40px 36px 42px;
    --sum-mt: 14px; --sum-h: 22px; --sum-ml: 3px;
    --bar-c: 3px; --bar-h: 18px; --calc-h: 216px; --calc-row: 21px; --calc-w: 145px;
    --cover-mt: 80px; --cover-h: 98px;
    --cn-pl: 30px;
}

.screen-e {
    left: 16px; top: 839px; width: 497px; height: 279px;
    padding-left: 9px;
    grid-template-columns: 108px 59px 145px 1fr;
    grid-template-rows: 23px 1fr;
    --fs: 4.900px;
    --logo-h: 45px; --logo-pt: 10px; --logo-ml: 7px;
    --navy-mt: 0; --navy-h: 141px;
    --pad: 4.850px; --row: 10.300px; --addr: 5px; --con: 7px; --g1: 3.350px; --g2: 9px; --g3: 2px;
    --col: 50px; --info-pl: 13px;
    --track-mt: 0; --track-h: 65px;
}

/* logo */
.logo {
    display: flex;
    align-items: flex-start;
    height: var(--logo-h);
    padding: var(--logo-pt) 0 0 var(--logo-ml);
    color: #24245f;
    white-space: nowrap;
}

.mark {
    flex: none;
    width: 24px;
    height: 18px;
    margin-right: -9px;
}

.logo-text {
    margin-top: 7px;
    font-style: italic;
    font-size: 22px;
    line-height: 26px;
    letter-spacing: 1.200px;
}

.logo-text b {
    font-weight: normal;
    font-size: 27px;
}

.screen-e .mark { width: 13px; height: 10px; margin-right: -5px; }
.screen-e .logo-text { margin-top: 3px; font-size: 11.500px; line-height: 16px; letter-spacing: .6px; }
.screen-e .logo-text b { font-size: 14px; }

.home {
    display: flex;
    align-items: center;
    justify-content: center;
    width: 17px;
    height: 17px;
    border: 1px solid #c8281e;
    background: #b9b2ae;
}

/* navy info panel */
.info {
    display: flex;
    flex-direction: column;
    height: var(--navy-h);
    margin-top: var(--navy-mt);
    padding: var(--pad) 10px 8px;
    background: #000060;
    border: 1px solid #2a2a80;
    color: #fff;
    font-size: var(--fs);
    -webkit-text-stroke: .25px;
}

.info-row {
    display: grid;
    grid-template-columns: var(--col) 1fr;
    flex: none;
    height: var(--row);
    margin-left: calc(var(--info-pl) - 10px);
    line-height: var(--row);
    white-space: nowrap;
}

.info-row.addr { height: calc(var(--addr) * 2); line-height: var(--addr); margin-top: var(--g1); }
.info-row.contact { height: calc(var(--con) * 3); line-height: var(--con); }
.info-row.rep { margin-top: var(--g2); }
.info-row.agent { margin-top: var(--g3); }

.msg-btn {
    margin-top: auto;
    flex: 0 0 43px;
    display: flex;
    align-items: center;
    justify-content: center;
    background: #478a80;
    border: 1px solid #6aa39a;
    font-size: 12.300px;
    font-weight: bold;
    -webkit-text-stroke: 0;
    white-space: nowrap;
}

.screen-e .info { padding: var(--pad) 5px 4px; -webkit-text-stroke: 0; }
.screen-e .info-row { margin-left: 8px; }
.screen-e .msg-btn { flex-basis: 21px; font-size: 6.200px; }

/* track buttons */
.tracks {
    display: grid;
    grid-template-columns: 1fr 1fr;
    column-gap: 2px;
    height: var(--track-h);
    margin-top: var(--track-mt);
}

.track {
    display: flex;
    align-items: center;
    justify-content: center;
    text-align: center;
    color: #fff;
    font-size: 14px;
    font-weight: bold;
    line-height: 26px;
    white-space: nowrap;
    border: 1px solid rgba(90, 90, 90, .25);
}

.teal { background: #478a80; }
.tan { background: #c49a64; }
.sand { background: #b09a72; }
.track.off { background: #ac9e88; color: #c9c1b4; }

.summary {
    display: flex;
    align-items: center;
    justify-content: center;
    color: #fff;
    font-weight: bold;
    font-size: 16.200px;
    white-space: nowrap;
    background: linear-gradient(100deg, #54958f 0%, #6f9d90 35%, #c99c63 100%);
}

/* search */
.search {
    display: flex;
    align-items: flex-start;
    padding-top: var(--search-mt);
    padding-left: var(--search-ml);
    color: #fff;
    font-size: 13.500px;
    font-style: italic;
    font-weight: bold;
    line-height: 17px;
    letter-spacing: .5px;
    white-space: nowrap;
}

.search-input {
    display: flex;
    align-items: center;
    justify-content: flex-end;
    width: var(--input-w);
    height: 17px;
    margin-left: 4px;
    padding-right: 3px;
    background: #d3d8e0;
}

/* select item list */
.list-print {
    position: absolute;
    left: 0;
    top: 11px;
}

.list-title {
    margin-top: var(--sel-mt);
    height: 20px;
    color: #20206a;
    font-size: 14.800px;
    font-weight: bold;
    line-height: 20px;
    text-align: center;
}

.list-head {
    display: flex;
    justify-content: center;
    gap: 11px;
    height: 12px;
    margin-top: var(--head-mt);
    color: #26266e;
    font-size: 9.500px;
    font-weight: bold;
    line-height: 12px;
}

.items {
    display: grid;
    grid-template-rows: var(--items);
    height: var(--panel-h);
    margin-top: var(--panel-mt);
    padding-top: var(--items-pt);
    background: #fff3e4;
}

.item {
    position: relative;
    display: grid;
    grid-template-columns: var(--item-cols);
    align-items: center;
    padding-left: 8px;
    color: #111;
    font-size: 8.900px;
    -webkit-text-stroke: .25px;
    white-space: nowrap;
}

.item u { position: absolute; right: 69px; }
.item > span:last-child { grid-column: 2; padding-left: 9px; }

.two {
    display: block;
    line-height: 8.500px;
    margin-bottom: -8.500px;
}

.faded .list-title, .faded .list-head, .faded .items {
    opacity: .2;
}

.item.red { color: #d81e1e; }

/* payment items column */
.detail-title {
    width: 213px;
    height: 20px;
    margin-top: var(--dt-mt);
    overflow: hidden;
    color: #c8201e;
    font-size: 14.300px;
    font-weight: bold;
    line-height: 20px;
    white-space: nowrap;
}

.detail-print {
    position: absolute;
    left: 217px;
    top: 3px;
}

.detail-sub {
    margin-top: var(--sub-mt);
    color: #26266e;
    font-size: 10.200px;
    font-weight: bold;
    line-height: 14px;
    text-align: center;
    white-space: nowrap;
}

.detail-sub em {
    color: #d01e1e;
    font-style: normal;
}

.bar {
    display: flex;
    align-items: center;
    justify-content: space-between;
    height: 18px;
    margin-top: var(--bar-mt);
    padding-left: 1px;
    overflow: hidden;
    background: #000;
    color: #fff;
    font-size: 8.500px;
    font-weight: bold;
    white-space: nowrap;
}

.bar b { color: #f2e200; flex: none; margin-left: 3px; }

.pay-items {
    display: grid;
    grid-template-rows: var(--pays);
    height: var(--dt-h);
    padding-top: 2px;
    background: #f5f9ff;
    color: #111;
    font-size: 9px;
    -webkit-text-stroke: .25px;
}

.hint {
    align-self: center;
    color: #26266e;
    font-style: italic;
    text-align: center;
}

.note {
    align-self: center;
    padding-left: 13px;
    font-size: 7.800px;
    white-space: nowrap;
}

.pay-item {
    display: flex;
    justify-content: space-between;
    align-items: center;
    padding: 0 19px 0 13px;
    white-space: nowrap;
}

.pay-item.red { color: #d81e1e; }

/* payment calculation column */
.calc .summary {
    height: var(--sum-h);
    margin: var(--sum-mt) 0 0 var(--sum-ml);
    border: 1px solid rgba(120, 120, 120, .3);
}

.claim-no {
    height: 16px;
    margin-top: 7px;
    padding-left: var(--cn-pl);
    color: #20205c;
    font-size: 13.500px;
    font-weight: bold;
    line-height: 16px;
    white-space: nowrap;
}

.calc-title {
    height: 20px;
    margin-top: 7px;
    padding-left: 32px;
    color: #26266e;
    font-size: 14.300px;
    font-weight: bold;
    line-height: 20px;
    white-space: nowrap;
}

.calc-bar {
    display: flex;
    justify-content: space-between;
    align-items: center;
    width: var(--calc-w);
    height: var(--bar-h);
    margin: var(--bar-c) 0 0 32px;
    background: #000;
    color: #fff;
    font-size: 8.800px;
    font-weight: bold;
    white-space: nowrap;
}

.calc-bar b { color: #f2e200; }

.calc-panel {
    height: var(--calc-h);
    padding: 1px 0 0 32px;
    background: linear-gradient(180deg, #dff0ee 0%, #fdeade 70%, #fdeade 100%);
    border: 1px solid rgba(150, 150, 150, .4);
    border-top: 0;
    color: #111;
    font-size: 8.800px;
    -webkit-text-stroke: .25px;
}

.calc-row {
    position: relative;
    display: flex;
    align-items: center;
    justify-content: space-between;
    width: var(--calc-w);
    height: var(--calc-row);
    white-space: nowrap;
}

.calc-row small {
    font-size: 6.200px;
    font-style: italic;
}

.dot {
    position: absolute;
    right: -19px;
    top: calc(50% - 5px);
    width: 10px;
    height: 10px;
    border-radius: 50%;
    background: radial-gradient(circle at 50% 30%, #5e9be0, #0f4fa8);
    color: #fff;
    font: italic bold 8px/10px "Liberation Serif", serif;
    text-align: center;
    -webkit-text-stroke: 0;
}

.calc-rule {
    width: 156px;
    height: 2px;
    margin-top: 6px;
    background: #a8a3b4;
}

.calc-pay {
    display: flex;
    gap: 6px;
    margin-top: 15px;
    color: #d01e1e;
    font-size: 9.800px;
    font-weight: bold;
    line-height: 16px;
    -webkit-text-stroke: 0;
}

.calc-pay span {
    padding-right: 6px;
    border-right: 1.500px solid #d01e1e;
}

.cover {
    display: grid;
    grid-template-columns: 121px 1fr;
    grid-auto-rows: 28.500px;
    align-items: center;
    height: var(--cover-h);
    margin-top: var(--cover-mt);
    padding-top: 7px;
    background: #000060;
    border: 1px solid #2a2a80;
    color: #fff;
    font-size: 9.300px;
    -webkit-text-stroke: .25px;
    white-space: nowrap;
}

.cover-key {
    padding-left: 3px;
    text-align: center;
    line-height: 10.500px;
}

/* browser chrome */
.chrome {
    position: relative;
    grid-column: 1 / -1;
    grid-row: 1;
    margin-left: -10px;
    background: #fff;
    display: flex;
    flex-direction: column;
    color: #666;
    font-size: 8.500px;
}

.tabs {
    flex: 0 0 26px;
    background: #e8eaed;
}

.tab {
    display: block;
    width: 167px;
    height: 100%;
    padding: 9px 0 0 45px;
    background: #fff;
    color: #5b5b8c;
    font-style: italic;
}

.address-row {
    display: flex;
    align-items: center;
    height: 17px;
    margin-top: 3px;
}

.nav {
    flex: 0 0 51px;
    padding-left: 5px;
    white-space: nowrap;
}

.address {
    flex: 1;
    height: 13px;
    padding-left: 13px;
    border-radius: 7px;
    background: #e8eaed;
    line-height: 13px;
}

.tools {
    flex: 0 0 53px;
    padding-left: 6px;
    white-space: nowrap;
}

.avatar {
    position: absolute;
    left: 4px;
    top: 0;
    width: 43px;
    height: 18px;
    border-radius: 0 0 22px 22px;
    background: #2a211c;
}

.badge {
    position: absolute;
    left: 51px;
    top: 4px;
    width: 66px;
    height: 21px;
    border-radius: 3px;
    background: #111;
    color: #fff;
    font-size: 10.500px;
    line-height: 21px;
    text-align: center;
}

.clock {
    position: absolute;
    right: 8px;
    top: 6px;
    width: 24px;
    height: 24px;
    padding: 4px;
    border-radius: 2px;
    background: #333;
}

.screen-e .chrome { margin-left: -9px; font-size: 3.500px; }
.screen-e .tabs { flex-basis: 12px; }
.screen-e .tab { width: 83px; padding: 3px 0 0 14px; }
.screen-e .address-row { height: 8px; margin-top: 1px; }
.screen-e .nav { flex-basis: 24px; padding-left: 2px; }
.screen-e .address { height: 7px; padding-left: 8px; line-height: 7px; border-radius: 0; background: #f4f5f6; }
.screen-e .tools { flex-basis: 30px; padding-left: 4px; }

/* popup window */
.modal {
    grid-column: 1;
    grid-row: 2 / 4;
    margin-top: 2px;
    border-right: 1px solid #26266e;
}

.modal-top {
    position: relative;
    display: flex;
    justify-content: center;
    height: 22px;
    border-bottom: 1px solid #26266e;
}

.modal-top h2 {
    margin: 0;
    color: #12186e;
    font-size: 13.200px;
    line-height: 22px;
}

.modal-x {
    position: absolute;
    right: 3px;
    top: 0;
    color: #c81e1e;
    font-size: 19px;
    line-height: 20px;
}

.modal-info {
    display: grid;
    grid-template-columns: 45px 237px 1fr;
    height: 63px;
    border-bottom: 1px solid #26266e;
}

.modal-info svg { margin: 4px 0 0 3px; }

.modal-costs h3 {
    margin: 0;
    color: #c8201e;
    font-size: 12px;
    line-height: 17px;
    white-space: nowrap;
}

.cost {
    display: flex;
    justify-content: space-between;
    padding-left: 2px;
    color: #1c2480;
    font-size: 9.100px;
    font-weight: bold;
    line-height: 15px;
}

.cost i { font-weight: normal; }

.modal-table {
    margin-left: 48px;
    padding-top: 3px;
    width: 176px;
    color: #222;
    font-size: 8px;
    -webkit-text-stroke: .25px;
}

.mt-row {
    display: grid;
    grid-template-columns: 55px 64px 1fr;
    line-height: 11.500px;
    white-space: nowrap;
}

.mt-row span:nth-child(n+2) { text-align: right; }
.mt-total { border-top: 1px solid #333; }

.modal-main {
    display: grid;
    grid-template-columns: 320px 1fr;
    margin-top: 3px;
}

.doc {
    height: 407px;
    background: #fff;
}

.doc-t { font-size: 6.500px; fill: #555; }
.doc-s { font-size: 3.500px; fill: #666; }

.modal-note {
    color: #1c1c1c;
    font-size: 8.900px;
    font-style: italic;
    font-weight: bold;
    line-height: 13px;
    text-align: center;
    white-space: nowrap;
}

/* residual tooltip */
.tip {
    position: absolute;
    left: 364px;
    top: 176px;
    width: 305px;
    height: 252px;
    padding-top: 36px;
    background: rgba(20, 28, 110, .94);
    color: #fff;
    font-size: 9.800px;
    font-weight: bold;
    line-height: 16.800px;
    text-align: center;
    white-space: nowrap;
}

.tip-x {
    position: absolute;
    right: 8px;
    top: 6px;
    font-size: 11px;
    font-weight: normal;
}

.stamp {
    position: absolute;
    width: 24px;
    height: 10px;
    border-radius: 2px;
    background: #fff;
    color: #555;
    font-size: 8px;
    line-height: 10px;
    text-align: center;
}

.screen-a .stamp { left: 169px; bottom: 0; height: 6px; overflow: hidden; }
.screen-b .stamp { left: 178px; bottom: 0; }
.screen-c .stamp { left: 205px; bottom: 0; }
.screen-d .stamp { left: 253px; bottom: 0; }

/* browser thumbnail */
.screen-e .side { grid-row: 2; }

.thumb-mid {
    grid-column: 3;
    grid-row: 2;
}

.screen-e .search {
    padding: 9px 0 0;
    font-size: 6.600px;
    line-height: 8px;
    letter-spacing: .2px;
}

.screen-e .search span { width: 46px; }

.screen-e .search-input {
    flex: 1;
    height: 8px;
    margin-left: 2px;
}

.screen-e .tracks {
    margin-top: 49px;
    column-gap: 1px;
}

.screen-e .track {
    font-size: 9.500px;
    line-height: 17px;
}

.screen-e .tan { background: #c0986a; }

.screen-e .summary {
    height: 19px;
    margin-top: 36px;
    font-size: 9.500px;
}

.thumb-right {
    grid-column: 4;
    grid-row: 2;
    display: flex;
    justify-content: flex-end;
    gap: 9px;
    padding: 10px 4px 0 0;
    color: #20205c;
    font-size: 6.800px;
    font-weight: bold;
    line-height: 9px;
    white-space: nowrap;
}

.thumb-right b {
    color: #111;
    font-size: 9px;
}

/* phone */
.phone {
    position: absolute;
    left: 110px;
    top: 100px;
    width: 319px;
    height: 712px;
    display: flex;
    flex-direction: column;
    overflow: hidden;
    filter: blur(.4px);
}

.status {
    display: flex;
    justify-content: space-between;
    align-items: center;
    flex: 0 0 26px;
    padding: 0 6px 6px 24px;
    background: #000;
    color: #ddd;
    font-size: 10.500px;
    font-weight: bold;
}

.phone-brand {
    position: relative;
    flex: 0 0 75px;
    background: #fff;
    border-bottom: 2px solid #c9c9c9;
}

.logo-phone {
    height: 50px;
    padding: 8px 0 0 64px;
}

.logo-phone .mark { width: 32px; height: 25px; margin-right: -16px; }
.logo-phone .logo-text { margin-top: 11px; font-size: 20px; line-height: 26px; letter-spacing: 1.700px; color: #24245f; }
.logo-phone .logo-text b { font-size: 25px; }

.phone-claim {
    padding-left: 51px;
    color: #4f4f78;
    font-size: 18.600px;
    line-height: 18px;
    white-space: nowrap;
}

.dot-big {
    right: 14px;
    top: 49px;
    width: 22px;
    height: 22px;
    font-size: 16px;
    line-height: 22px;
}

.phone-search {
    display: flex;
    flex: 0 0 49px;
    align-items: center;
    background: #fff;
    border-bottom: 1px solid #c9c9c9;
    color: #a9a9a9;
    font-size: 10.600px;
    font-style: italic;
    letter-spacing: .3px;
    white-space: nowrap;
}

.phone-input {
    display: flex;
    justify-content: space-between;
    align-items: center;
    flex: 1;
    height: 28px;
    margin-left: 4px;
    padding: 0 4px 0 3px;
    background: #f6f6fa;
    border: 1px solid #cfcfcf;
    border-right: 0;
}

.phone-body {
    flex: 1;
    padding-top: 109px;
    background: linear-gradient(180deg, #b8aca6 0%, #c9ab98 24%, #bfaeb0 55%, #a6bbda 100%);
}

.phone .tracks {
    --track-h: 146px;
    column-gap: 4px;
}

.phone .track {
    font-size: 20px;
    line-height: 38px;
    color: #eee;
}

.phone .tan { background: #c69c68; }

.phone-summary {
    flex: 0 0 46px;
    font-size: 21.300px;
    color: #eee;
    background: linear-gradient(170deg, #4e9690 0%, #6f9d90 45%, #c99c63 90%);
}

.touch {
    position: absolute;
    left: 48px;
    top: 538px;
    width: 40px;
    height: 40px;
    border-radius: 50%;
    background: #e5a77c;
}
```
